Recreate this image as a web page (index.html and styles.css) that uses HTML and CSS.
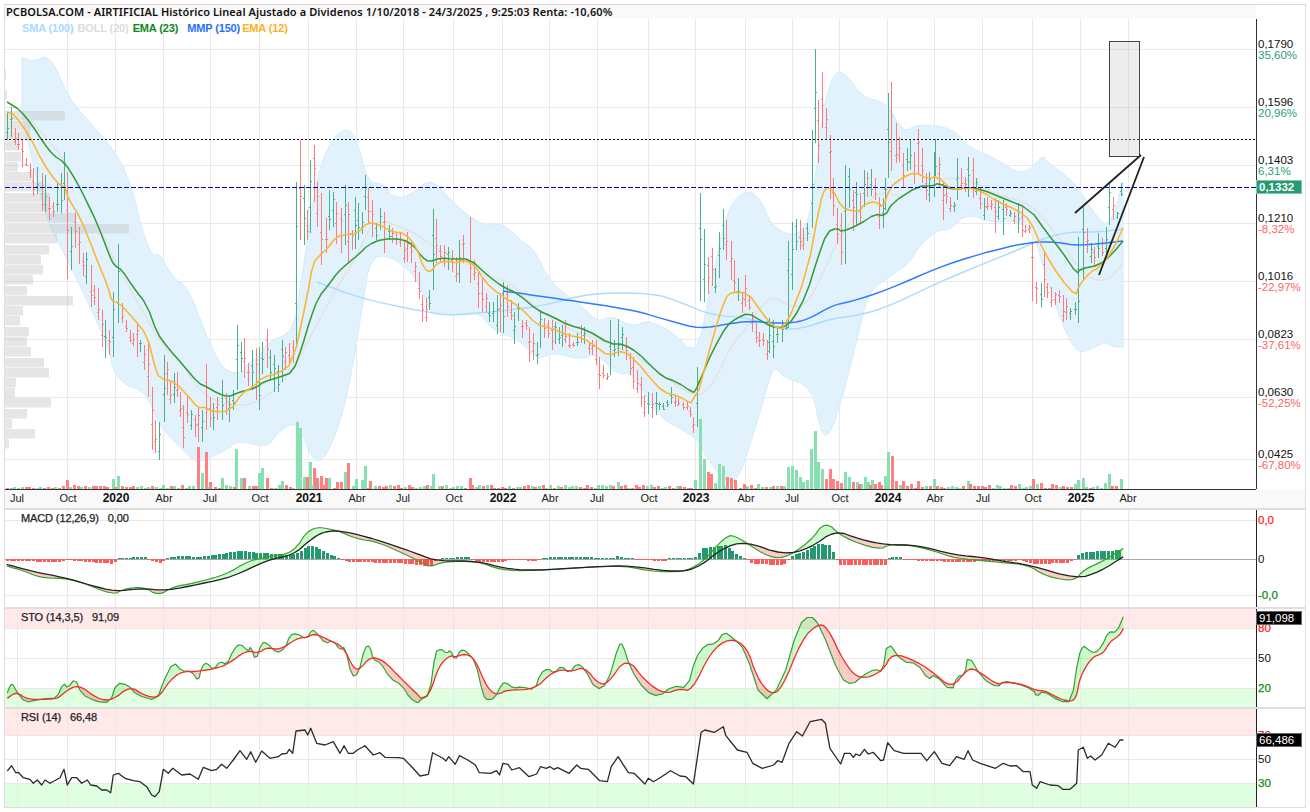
FILE: index.html
```html
<!DOCTYPE html>
<html lang="es">
<head>
<meta charset="utf-8">
<title>PCBOLSA.COM - AIRTIFICIAL</title>
<link rel="stylesheet" href="styles.css">
</head>
<body>
<div class="chart">
  <div class="title-row"><div class="title">PCBOLSA.COM - AIRTIFICIAL Histórico Lineal Ajustado a Dividenos 1/10/2018 - 24/3/2025 , 9:25:03 Renta: -10,60%</div></div>
  <section class="panel panel-main">
    <div class="plot">
      <svg id="plot-main" class="plot-svg" width="1251" height="470" viewBox="5 19 1251 470"></svg>
      <div class="legend">
        <span class="lg-sma">SMA (100)</span>
        <span class="lg-boll">BOLL (20)</span>
        <span class="lg-ema23">EMA (23)</span>
        <span class="lg-mmp">MMP (150)</span>
        <span class="lg-ema12">EMA (12)</span>
      </div>
    </div>
    <div class="axis axis-price">
      <div class="tick"><div>0,1790</div><div class="up">35,60%</div></div>
      <div class="tick"><div>0,1596</div><div class="up">20,96%</div></div>
      <div class="tick"><div>0,1403</div><div class="up">6,31%</div></div>
      <div class="tick"><div>0,1210</div><div class="down">-8,32%</div></div>
      <div class="tick"><div>0,1016</div><div class="down">-22,97%</div></div>
      <div class="tick"><div>0,0823</div><div class="down">-37,61%</div></div>
      <div class="tick tick-wide"><div>0,0630</div><div class="down">-52,25%</div></div>
      <div class="tick"><div>0,0425</div><div class="down">-67,80%</div></div>
      <div class="tag tag-price">0,1332</div>
    </div>
  </section>
  <div class="xaxis"><svg id="x-axis" width="1251" height="18" viewBox="5 490 1251 18"></svg></div>
  <section class="panel panel-macd">
    <div class="plot">
      <svg id="plot-macd" class="plot-svg" width="1251" height="97" viewBox="5 510 1251 97"></svg>
      <div class="study">MACD (12,26,9)<span class="study-val">0,00</span></div>
    </div>
    <div class="axis axis-macd">
      <div class="row row-39 down-strong">0,0</div>
      <div class="row row-36">0</div>
      <div class="row row-11 up-strong">-0,0</div>
    </div>
  </section>
  <section class="panel panel-sto">
    <div class="plot">
      <svg id="plot-sto" class="plot-svg" width="1251" height="98" viewBox="5 609 1251 98"></svg>
      <div class="study">STO (14,3,5)<span class="study-val">91,09</span></div>
    </div>
    <div class="axis axis-sto">
      <div class="row row-30 down-strong">80</div>
      <div class="row row-30">50</div>
      <div class="row row-11 up-strong">20</div>
      <div class="tag tag-sto">91,098</div>
    </div>
  </section>
  <section class="panel panel-rsi">
    <div class="plot">
      <svg id="plot-rsi" class="plot-svg" width="1251" height="98" viewBox="5 709 1251 98"></svg>
      <div class="study">RSI (14)<span class="study-val">66,48</span></div>
    </div>
    <div class="axis axis-rsi">
      <div class="row row-24 down-strong">70</div>
      <div class="row row-24">50</div>
      <div class="row row-11 up-strong">30</div>
      <div class="tag tag-rsi">66,486</div>
    </div>
  </section>
</div>
<script src="chart.js"></script>
</body>
</html>
```
FILE: styles.css
```css
* { box-sizing: border-box; }
html, body { margin: 0; padding: 0; background: #fff; }
body { font-family: "Liberation Sans", Arial, sans-serif; font-size: 11px; color: #111; }
.chart {
  margin: 4px 0 0 4px;
  width: 1302px;
  height: 804px;
  border: 1px solid #dedede;
  border-top-color: #eccfcf;
  background: #dfdfdf;
  display: flex;
  flex-direction: column;
}
.title-row { height: 14px; flex: none; background: #fff; }
.title {
  width: 1251px;
  height: 14px;
  padding-left: 1px;
  background: #f9f9f9;
  font-family: "Noto Sans", sans-serif;
  font-weight: 600;
  font-size: 11px;
  letter-spacing: .085px;
  line-height: 14px;
  color: #111;
  white-space: nowrap;
}
.panel { display: flex; position: relative; background: #fff; flex: none; }
.panel-main { height: 471px; }
.panel-macd { height: 97px; margin-top: 2px; }
.panel-sto, .panel-rsi { height: 98px; margin-top: 2px; }
.plot { position: relative; width: 1251px; flex: none; }
.panel-main .plot { border-bottom: 1px solid #333; height: 471px; }
.plot-svg { display: block; }
.legend {
  position: absolute;
  left: 17px;
  top: 3px;
  display: flex;
  font-size: 11px;
  line-height: 12px;
  font-weight: bold;
  letter-spacing: -.14px;
  white-space: nowrap;
}
.lg-sma { color: #a6dbff; margin-right: 4px; }
.lg-boll { color: #dcdcdc; margin-right: 4px; }
.lg-ema23 { color: #0b8a1a; margin-right: 9px; }
.lg-mmp { color: #1f6fff; margin-right: 2px; }
.lg-ema12 { color: #ffb020; }
.axis {
  position: relative;
  flex: 1;
  padding-left: 1px;
  border-left: 1px solid #222;
  line-height: 11px;
  font-size: 11.5px;
  color: #111;
}
.axis-price { padding-top: 20px; height: 470px; border-left-color: #333; }
.tick { height: 58px; }
.tick-wide { height: 62px; }
.up { color: #2d9e78; }
.down { color: #ff6464; }
.up-strong { color: #0d8a0d; -webkit-text-stroke: .25px #0d8a0d; }
.down-strong { color: #f22; -webkit-text-stroke: .25px #f22; }
.axis-macd { padding-top: 5px; height: 97px; }
.axis-sto { padding-top: 14px; }
.axis-rsi { padding-top: 21px; }
.row-39 { height: 39px; }
.row-36 { height: 36px; }
.row-30 { height: 30px; }
.row-24 { height: 24px; }
.row-11 { height: 11px; }
.row { font-size: 11.5px; }
.tag {
  position: absolute;
  left: -1px;
  width: 46px;
  height: 14px;
  border: 1px solid #666;
  padding-left: 2px;
  line-height: 12px;
  font-size: 11.5px;
  color: #fff;
  background: #000;
}
.tag-price {
  top: 161px;
  font-weight: bold;
  background: #269b72;
  border-color: #7fc9ae;
}
.tag-sto { top: 2px; }
.tag-rsi { top: 24px; }
.xaxis { height: 18px; background: #f9f9f9; flex: none; }
.xaxis svg { display: block; }
.study {
  position: absolute;
  left: 16px;
  top: 2px;
  font-size: 11px;
  line-height: 12px;
  letter-spacing: -.12px;
  -webkit-text-stroke: .25px #222;
  color: #222;
  white-space: nowrap;
}
.study-val { margin-left: 9px; }
.x-month { font-family: "Liberation Sans", sans-serif; font-size: 11px; fill: #222; text-anchor: middle; }
.x-year { font-family: "Liberation Sans", sans-serif; font-size: 12px; font-weight: bold; fill: #111; text-anchor: middle; }
```
FILE: chart.js
```js
// Parse "x,y x,y" strings taken from chart readings, with offset and scale.
function P(s, ox, oy, sx, sy) {
  ox = ox || 0; oy = oy || 0; sx = sx || 1; sy = sy || 1;
  return s.trim().split(/\s+/).map(function (p) {
    var a = p.split(',');
    return [ox + a[0] / sx, oy + a[1] / sy];
  });
}
// Corner-cutting, so the hand-read curves come out smooth.
function smooth(pts, n) {
  for (var k = 0; k < n; k++) {
    var out = [pts[0]];
    for (var i = 0; i < pts.length - 1; i++) {
      var a = pts[i], b = pts[i + 1];
      out.push([a[0] * .75 + b[0] * .25, a[1] * .75 + b[1] * .25]);
      out.push([a[0] * .25 + b[0] * .75, a[1] * .25 + b[1] * .75]);
    }
    out.push(pts[pts.length - 1]);
    pts = out;
  }
  return pts;
}
var seed = 12345;
function rnd() { seed = (seed * 1103515245 + 12345) & 0x7fffffff; return seed / 0x7fffffff; }
function d(pts) { return 'M' + pts.map(function (p) { return p[0].toFixed(1) + ' ' + p[1].toFixed(1); }).join('L'); }
function line(pts, color, w) {
  return '<path d="' + d(pts) + '" fill="none" stroke="' + color + '" stroke-width="' + w + '" stroke-linejoin="round"/>';
}
function interp(pts, x) {
  if (x <= pts[0][0]) return pts[0][1];
  for (var i = 1; i < pts.length; i++) {
    if (x <= pts[i][0]) {
      var a = pts[i - 1], b = pts[i];
      return b[0] === a[0] ? b[1] : a[1] + (b[1] - a[1]) * (x - a[0]) / (b[0] - a[0]);
    }
  }
  return pts[pts.length - 1][1];
}
function rect(x, y, w, h, fill) {
  return '<rect x="' + x + '" y="' + y + '" width="' + w + '" height="' + h + '" fill="' + fill + '"/>';
}
var VX = [67, 115, 163, 210, 259, 308, 356, 403, 453, 502, 549, 597, 648, 695, 745, 792, 839, 887, 934, 982, 1032, 1080, 1128];
var GRID = '#e9e9e9';
function grid(ys, top, bottom, extra) {
  var s = '';
  ys.forEach(function (y) { s += rect(5, y, 1251, 1, GRID); });
  VX.concat(extra || []).forEach(function (x) { s += rect(x, top, 1, bottom - top, GRID); });
  return s;
}
// Shaded area between a fast and a slow line, coloured by which one is on top.
function between(a, b, x0, x1) {
  var s = '', seg = [], sign = 0;
  function flush() {
    if (seg.length > 1) {
      var poly = seg.map(function (r) { return [r[0], r[1]]; })
        .concat(seg.slice().reverse().map(function (r) { return [r[0], r[2]]; }));
      s += '<path d="' + d(poly) + 'Z" fill="' + (sign > 0 ? 'rgba(0,230,0,.2)' : 'rgba(230,30,0,.22)') + '"/>';
    }
    seg = [];
  }
  for (var x = x0; x <= x1; x += 0.5) {
    var ya = interp(a, x), yb = interp(b, x);
    var sg = ya < yb ? 1 : -1;
    if (sg !== sign && seg.length) { seg.push([x, ya, yb]); flush(); }
    sign = sg;
    seg.push([x, ya, yb]);
  }
  flush();
  return s;
}

/* ---------- main chart ---------- */
var ema23 = smooth(P('7,102 20,110 32,125 43,142 53,155 65,163 77,182 87,202 97,223 110,257 114,265 122,270 133,287 147,305 157,333 168,348 183,365 198,383 207,387 217,393 228,397 240,392 248,390 257,387 263,382 280,377 293,372 302,347 310,320 318,298 330,283 337,273 348,263 358,255 368,245 382,239 402,239 413,245 422,257 429,262 440,258 453,259 470,259 487,275 503,287 517,293 537,310 553,317 568,325 587,330 610,344 623,344 637,352 650,365 663,377 677,382 692,392 695,392 703,373 713,350 727,325 737,318 748,313 760,320 772,327 783,328 793,320 807,293 817,260 827,232 837,228 842,232 860,224 875,214 885,216 892,203 918,186 933,186 938,183 953,190 968,187 983,190 1000,197 1030,209 1047,233 1063,253 1077,274 1080,269 1100,265 1113,253 1123,241'), 1);
var ema12 = smooth(P('7,112 15,115 30,137 43,163 57,183 65,187 68,198 80,217 90,242 97,260 108,287 112,302 118,302 133,318 147,335 155,367 159,378 175,382 187,395 198,408 205,407 213,412 230,411 242,393 253,387 263,377 277,374 293,363 307,297 313,263 320,255 328,248 335,238 343,235 358,233 368,222 380,225 393,232 405,233 417,248 423,267 430,273 437,263 447,261 455,263 463,260 475,265 485,282 500,295 520,307 537,325 548,327 567,335 583,338 597,347 608,356 623,350 637,362 650,378 663,392 678,396 695,405 712,340 725,298 732,292 748,293 760,310 773,327 785,329 807,273 820,203 825,188 832,188 842,208 852,211 860,211 863,205 875,201 883,208 890,187 902,178 915,172 928,179 937,176 952,190 967,187 983,192 998,202 1017,210 1030,220 1043,250 1060,278 1076,296 1078,287 1090,272 1100,267 1113,250 1123,228'), 1);
var mmp = smooth(P('503,291 553,298 587,303 633,310 670,321 700,329 727,324 750,321 773,323 790,323 807,320 833,305 850,302 887,290 937,268 973,256 1007,247 1033,242 1057,242 1078,246 1123,241'), 2);
var sma = smooth(P('317,282 360,298 410,309 440,314 453,315 503,311 547,305 590,293 653,293 680,302 710,315 750,318 787,330 807,327 830,319 860,315 887,307 933,285 980,265 1013,252 1047,237 1070,232 1100,232 1123,229'), 2);
var bollMid = smooth(P('23,110 50,143 67,163 110,250 115,263 138,303 163,347 180,360 200,393 227,405 250,405 267,397 293,370 307,343 323,313 337,287 353,263 370,227 380,220 410,230 437,248 453,258 473,267 487,277 507,280 530,303 560,325 593,338 620,347 647,363 673,383 697,398 713,385 730,347 747,327 760,307 773,296 790,307 807,305 823,273 838,240 850,223 877,190 903,198 920,185 947,177 970,180 997,195 1030,203 1047,223 1063,243 1080,272 1105,284 1123,263'), 2);
var upper = smooth(P('22,57 33,62 50,54 68,97 90,123 117,153 133,190 140,223 152,257 160,253 172,277 188,287 207,337 222,368 233,373 243,372 248,363 260,357 267,342 293,332 300,290 317,173 333,137 348,127 358,143 368,183 383,183 392,197 408,197 428,180 440,187 453,203 482,226 503,223 520,240 535,250 550,283 583,307 597,322 612,316 633,327 648,320 673,332 697,357 710,290 727,207 748,188 763,203 770,223 790,237 808,227 817,167 823,107 835,70 847,75 863,98 887,102 903,133 917,124 953,128 968,147 993,157 1017,173 1030,170 1043,155 1047,162 1075,182 1097,218 1110,227 1123,182'), 2);
var lower = smooth(P('22,115 30,150 40,195 50,227 57,240 75,275 110,350 112,370 128,387 137,388 148,397 160,427 180,447 193,460 200,462 227,450 238,440 267,448 277,433 297,420 315,467 330,450 347,400 363,303 370,258 390,255 417,277 430,313 440,315 467,315 480,313 492,330 520,340 537,360 553,352 580,360 597,353 617,375 633,372 657,417 697,437 703,453 728,485 740,477 763,403 773,365 783,377 812,387 820,430 828,438 840,407 857,340 868,293 887,278 910,263 918,247 937,230 950,230 967,213 993,223 1013,220 1033,230 1047,280 1063,327 1078,354 1093,348 1105,342 1113,347 1123,347'), 2);
var profile = [[70,6],[90,7],[111,65],[121,31],[131,30],[141,18],[152,21],[162,18],[172,33],[182,42],[193,50],[203,50],[213,76],[224,129],[234,57],[245,49],[255,41],[265,43],[275,33],[286,27],[296,73],[306,23],[316,20],[327,29],[337,27],[347,31],[358,44],[368,49],[378,16],[388,15],[398,51],[409,27],[419,12],[429,35],[439,9]];

// High / low readings: x,top,bottom,colour (1 green, 0 red)
function B(s, ox, oy) {
  return s.trim().split(/\s+/).map(function (p) {
    var a = p.split(',');
    return [Math.round(ox + a[0] / 3), oy + a[1] / 3, oy + a[2] / 3, +a[3]];
  });
}
var bars = B('22,335,420,1 33,320,410,1 45,385,435,0 55,400,450,0 67,420,500,0 78,475,500,0 90,490,535,0 100,505,590,0 112,500,580,1 125,520,635,0 135,525,635,1 147,590,660,0 158,605,650,0 170,545,635,1 182,520,640,1', 0, 0)
  .concat(B('193,65,210,1 202,125,445,0 214,290,420,1 226,250,355,0 238,290,400,0 249,370,440,0 259,365,460,1 272,405,530,0 283,465,525,0 293,475,570,0 305,540,650,0 316,570,685,1 328,600,675,0 340,485,680,1 355,342,578,1 367,520,580,0 378,570,605,0 389,600,640,0 400,610,650,0 412,575,680,0 421,630,665,1 433,645,720,0 445,630,800,0 457,770,960,0 466,870,970,0 478,875,988,1 491,675,875,1 502,695,795,0 510,755,820,0 521,730,820,1 532,725,800,0 540,785,860,0 550,825,955,0 562,795,880,0 574,840,900,1 584,855,920,0 595,830,935,0 607,840,935,1 619,702,900,0 631,800,890,0 640,820,900,1 652,800,870,0 665,750,870,1 677,790,855,0 688,795,875,1 698,780,840,1 710,585,780,1 722,635,725,1 733,625,745,0 745,700,770,0 755,660,780,1 767,655,810,0 778,650,840,1 787,635,730,1 800,598,715,0 810,660,750,1 823,675,785,1 835,705,785,1 845,630,755,1 855,650,720,0 868,640,705,0 880,630,700,0 889,155,650,1 901,30,330,0 913,165,345,1 922,240,330,0 931,90,310,1 943,45,215,0 952,155,290,0 964,190,405,0 977,265,370,0 988,180,300,1 1000,185,290,1 1008,215,340,0 1022,235,370,0 1034,165,345,1 1045,215,400,0 1055,300,360,0 1066,200,355,1 1075,220,330,1 1085,245,310,1 1096,135,240,1 1105,175,280,0 1116,210,320,0 1128,280,330,1 1140,235,300,1 1152,247,370,0 1166,285,330,1 1175,295,340,0 1188,305,345,0 1200,305,350,0 1211,330,400,0 1221,305,395,0 1232,330,400,0 1244,395,455,0 1256,425,505,0 1265,495,575,0 1277,505,577,0 1288,480,540,1', 0, 130))
  .concat(B('40,238,480,1 48,268,400,0 60,345,400,0 72,345,410,0 85,350,420,1 97,360,425,0 107,380,455,0 118,330,460,1 130,315,400,0 150,262,460,0 162,390,450,0 175,420,535,0 187,440,545,0 197,490,550,0 208,515,575,1 220,515,575,1 232,495,612,1 241,490,608,0 250,455,608,1 262,465,560,0 272,510,570,0 283,545,640,1 295,520,575,1 306,570,625,0 317,570,600,0 328,590,695,0 340,610,690,0 352,635,702,1 361,540,655,1 372,565,625,0 385,570,625,0 397,570,660,0 406,575,640,1 417,590,640,1 427,585,650,1 436,570,640,0 448,610,655,0 460,635,650,0 472,610,650,1 482,585,640,0 493,590,640,1 506,635,670,0 516,630,675,0 527,630,705,0 537,680,775,0 550,705,745,0 560,728,750,0 571,570,735,1 583,630,680,1 595,568,680,1 607,590,660,1 619,620,690,0 630,670,735,0 640,680,775,0 652,720,790,0 664,740,830,0 673,795,860,0 685,785,850,1 697,790,865,0 709,785,855,1 718,815,840,1 730,820,840,1 742,810,830,1 754,770,820,1 765,795,830,0 775,805,830,0 788,815,840,0 800,815,840,0 810,830,860,0 820,860,908,0 830,710,890,1 841,190,515,1 853,297,515,1 864,380,490,0 875,355,470,0 886,415,490,1 898,307,445,1 910,238,360,1 918,270,390,0 932,333,450,0 942,390,490,0 955,445,515,1 965,490,550,0 976,435,530,0 987,495,540,0 995,545,605,0 1008,580,640,0 1018,605,650,0 1030,610,650,0 1040,630,690,0 1048,565,670,1 1060,570,685,1 1072,595,640,1 1085,570,635,1 1097,580,600,1 1105,333,595,1 1117,277,480,1 1128,268,360,1 1140,270,360,0 1150,295,360,0 1162,280,335,1', 420, 130))
  .concat(B('95,270,565,1 105,28,310,1 115,180,370,0 127,97,265,0 139,205,300,0 150,285,478,0 160,415,530,0 172,505,612,0 184,520,675,0 196,375,672,1 208,385,505,1 218,450,573,0 229,425,555,1 240,460,550,0 253,390,500,1 262,395,470,0 274,388,470,1 285,415,480,0 298,470,565,0 308,475,565,1 316,415,510,1 325,160,415,1 334,127,395,0 347,250,370,0 358,290,365,0 369,338,440,0 380,325,395,1 391,297,390,1 403,335,430,0 415,268,405,0 427,325,430,0 437,400,480,0 448,395,485,1 461,335,470,1 466,298,410,1 478,350,440,0 490,430,540,0 498,440,490,0 510,470,515,0 521,485,515,1 532,355,480,1 544,385,450,0 556,410,455,0 565,350,470,1 578,355,475,0 589,415,465,1 600,440,505,0 611,475,540,1 622,470,510,0 634,480,510,0 646,475,580,0 655,480,540,1 668,480,585,1 679,490,530,0 690,510,530,1 703,515,550,0 713,490,580,1 725,500,590,0 735,555,580,0 747,555,580,0 757,610,785,0 768,725,790,0 782,730,803,1 792,635,770,0 802,730,775,0 813,740,800,0 825,755,795,0 837,750,790,0 848,765,845,0 858,775,840,0 870,805,840,1 885,785,825,1 895,590,848,1 910,500,715,1 921,565,640,0 932,610,670,1 943,620,680,0 955,580,655,1 967,595,650,0 977,560,655,1 988,430,555,1 1000,470,540,0 1012,515,535,1 1022,430,470,1', 780, 40));

// Volume readings: x,height,colour. Weeks not listed are drawn small.
var volPeaks = [[67,9,0],[113,10,1],[118,13,1],[198,42,0],[202,16,1],[206,37,0],[210,7,0],[222,11,1],[236,40,1],[241,11,1],[244,11,0],[259,16,1],[262,21,1],[267,11,0],[282,8,1],[297,67,1],[300,61,1],[304,12,1],[307,12,0],[310,27,1],[314,21,0],[317,11,0],[321,13,0],[326,11,0],[329,11,1],[337,7,0],[341,7,0],[345,17,1],[348,26,0],[356,10,1],[362,9,1],[365,23,1],[370,8,0],[433,15,1],[470,11,0],[610,4,1],[618,7,1],[695,9,1],[700,70,1],[704,30,1],[708,17,0],[711,15,0],[715,6,1],[719,25,1],[723,23,1],[727,12,0],[731,11,0],[735,9,0],[788,22,1],[792,23,1],[796,19,1],[800,12,1],[803,7,1],[807,9,1],[811,40,1],[815,58,1],[818,27,1],[822,20,1],[826,10,0],[830,20,0],[833,10,0],[837,8,0],[841,6,0],[845,17,1],[849,12,1],[853,7,0],[857,7,1],[861,5,1],[865,12,1],[868,7,1],[872,9,1],[875,5,0],[879,7,0],[885,13,1],[888,37,1],[892,33,0],[896,8,0],[903,8,0],[918,8,0],[934,10,1],[968,8,1],[1033,10,0],[1041,6,0],[1078,9,1],[1083,11,1],[1105,6,1],[1109,15,1],[1121,10,1]];

var s = '';
s += grid([49, 107, 165, 223, 281, 339, 397, 459], 19, 489);
s += '<path d="' + d(upper.concat(lower.slice().reverse())) + 'Z" fill="#e1f2fd" stroke="#d3ecfd" stroke-width="1"/>';
profile.forEach(function (r) { s += rect(5, r[0], r[1] - 5, 9.5, 'rgba(190,190,190,.38)'); });
s += line(bollMid, '#e2e2e2', 1.4);
s += line(sma, '#a9dcff', 1.4);

// volume
var used = {};
volPeaks.forEach(function (v) {
  used[Math.round((v[0] - 7) / 3.72)] = 1;
  s += rect(v[0] - 1, 489 - v[1], 3, v[1], v[2] ? '#86e0b0' : '#ff8080');
});
for (var i = 0; i < 300; i++) {
  var r1 = rnd(), r2 = rnd();
  if (used[i]) continue;
  var vx = Math.round(7 + 3.72 * i);
  var mx = vx < 60 ? 1.5 : vx < 190 ? 3.5 : vx < 700 ? 4 : vx < 1078 ? 4.5 : 3;
  if (vx > 1124) continue;
  var vh = Math.ceil(r1 * mx);
  s += rect(vx - 1, 489 - vh, 3, vh, r2 > 0.5 ? '#86e0b0' : '#ff8080');
}

// OHLC bars
bars.forEach(function (b) {
  var col = b[3] ? '#4bb08a' : '#ff7b7b';
  var h = b[2] - b[1];
  var a = Math.round(b[1] + h * (0.2 + rnd() * 0.6)), c = Math.round(b[1] + h * (0.2 + rnd() * 0.6));
  s += rect(b[0], Math.round(b[1]), 1, Math.round(h), col);
  s += rect(b[0] - 1, a, 1, 1, col);
  s += rect(b[0] + 1, c, 1, 1, col);
});
s += line(mmp, '#2f7cff', 1.5);
s += line(ema23, '#349b34', 1.5);
s += line(ema12, '#ffb22c', 1.5);
s += '<line x1="5" x2="1256" y1="139.5" y2="139.5" stroke="#111" stroke-dasharray="2 2"/>';
s += '<line x1="5" x2="1256" y1="187.5" y2="187.5" stroke="#0000bb" stroke-dasharray="5 2"/>';
s += '<rect x="1109.5" y="41.5" width="30" height="115" fill="rgba(190,190,190,.27)" stroke="#444"/>';
s += '<path d="M1075 213L1141 155M1099 275L1144 157" stroke="#222" stroke-width="1.8" fill="none"/>';
document.getElementById('plot-main').innerHTML = s;

/* ---------- x axis ---------- */
var xl = [[17,'Jul'],[68,'Oct'],[116,'2020',1],[164,'Abr'],[210,'Jul'],[260,'Oct'],[309,'2021',1],[357,'Abr'],[403,'Jul'],[454,'Oct'],[503,'2022',1],[550,'Abr'],[597,'Jul'],[649,'Oct'],[696,'2023',1],[746,'Abr'],[792,'Jul'],[840,'Oct'],[888,'2024',1],[935,'Abr'],[983,'Jul'],[1033,'Oct'],[1081,'2025',1],[1128,'Abr']];
document.getElementById('x-axis').innerHTML = xl.map(function (t) {
  return '<text x="' + t[0] + '" y="502" class="' + (t[2] ? 'x-year' : 'x-month') + '">' + t[1] + '</text>';
}).join('');

/* ---------- MACD ---------- */
var macdSig = smooth(P('20,373 100,395 190,412 270,435 345,455 420,445 500,452 600,432 700,410 800,360 880,345 930,300 970,275 1020,272 1100,290 1210,326', 0, 440, 3, 3)
  .concat(P('0,165 45,183 150,183 220,205 290,212 460,200 550,197 650,215 720,210 790,145 850,123 950,165 1020,145 1085,90 1150,118 1220,135 1300,135 1400,165 1470,172', 420, 500, 2.615, 3))
  .concat(P('0,182 90,195 230,237 300,215 370,170', 1000, 500, 3, 3)), 2);
var macd = smooth(P('20,378 70,392 120,413 190,415 240,425 340,465 370,447 430,440 475,467 520,440 580,430 680,403 740,365 800,350 880,340 930,258 1010,270 1070,297 1130,305 1210,340', 0, 440, 3, 3)
  .concat(P('0,185 25,202 60,185 150,183 210,210 290,213 460,200 530,197 620,217 720,212 800,105 830,110 900,165 950,178 1020,125 1060,62 1105,113 1200,150 1230,132 1290,137 1350,155 1400,175 1500,185', 420, 500, 2.615, 3))
  .concat(P('0,187 85,195 130,225 190,240 228,238 250,210 310,183 370,145', 1000, 500, 3, 3)), 2);
var hist = P('7,-2 60,-3 67,-1 90,-3 113,-5 120,1 145,2 150,-2 160,-4 167,1 180,3 200,2 240,8 260,6 290,4 300,7 310,14 320,10 335,2 340,0 350,-3 400,-4 420,-6')
  .concat(P('0,-7 30,-7 40,-2 60,1 130,2 135,0 150,-3 220,-3 225,-1 280,-1.5 310,-1.5 330,1.5 450,1.5 470,0 500,1 520,3 540,1 580,-1 640,-2 650,0 660,1 710,1 720,2 740,11 800,14 820,7 840,2 850,0 870,-5 950,-6 960,-2 970,3 1000,7 1040,15 1070,14 1085,3 1098,-6 1220,-6 1228,2 1260,2 1265,0 1310,-2 1420,-3 1480,-2 1560,-2', 420, 0, 2.615, 1))
  .concat(P('60,-1 100,-5 200,-4 225,-1 232,4 260,7 370,9', 1000, 0, 3, 1));

var m = grid([520, 595], 510, 607);
m += rect(5, 559, 1251, 1, '#a8a8a8');
for (var j = 0; j < 300; j++) {
  var hx = Math.round(7 + 3.72 * j);
  if (hx > 1124) break;
  var hv = interp(hist, hx);
  var hh = Math.max(0.5, Math.abs(hv));
  m += hv >= 0 ? rect(hx - 1, 559 - Math.round(hh), 3, Math.round(hh), '#24996f') : rect(hx - 1, 559, 3, Math.round(hh), '#ff5a5a');
}
m += between(macd, macdSig, 7, 1123);
m += line(macd, '#3a9e32', 1.2);
m += line(macdSig, '#222', 1.3);
document.getElementById('plot-macd').innerHTML = m;

/* ---------- Stochastic ---------- */
var stoK = smooth(P('22,278 35,247 50,275 75,307 110,300 140,295 170,295 190,248 203,265 225,235 245,283 290,305 330,308 350,248 385,255 410,285 470,303 490,245 520,185 545,213 575,213 595,245 605,200 620,187 640,210 660,183 680,195 700,150 720,130 745,155 752,138 767,183 785,128 800,128 830,160 855,145 870,105 890,100 920,118 935,90 947,95 975,130 1000,122 1020,150 1035,140 1055,230 1075,222 1095,140 1110,138 1120,180 1140,185 1170,235 1205,255 1230,295 1255,310', 0, 600, 3, 3)
  .concat(P('0,600 25,585 40,455 55,447 70,460 80,450 92,482 105,450 120,452 145,485 165,585 175,600 195,595 215,550 225,548 245,565 265,560 300,570 315,520 335,505 350,520 370,497 390,520 410,490 430,505 460,570 490,553 520,432 530,432 550,505 590,575 625,590 660,558 700,563 720,475 745,435 775,430 795,395 820,415 850,450 895,610 945,555 990,375 1020,345 1045,375 1100,535 1130,555 1160,525 1190,507 1210,517 1222,422 1260,485 1300,490 1330,540 1345,522 1390,575 1405,528 1425,525 1433,463 1470,535 1510,563', 420, 500, 2.615, 3))
  .concat(P('10,543 50,550 100,570 110,590 130,572 180,605 215,605 235,470 250,435 265,450 285,460 305,440 325,395 350,397 370,350', 1000, 500, 3, 3)), 1);
var stoD = smooth(P('22,295 50,275 80,298 140,298 175,295 195,275 235,253 290,295 335,303 390,258 430,285 475,295 510,240 545,215 585,215 640,207 680,195 740,150 775,160 800,142 840,150 890,115 920,112 945,100 990,122 1030,140 1060,205 1080,208 1110,170 1150,180 1205,238 1260,290', 0, 600, 3, 3)
  .concat(P('0,595 25,585 50,495 80,465 90,472 120,460 145,480 170,550 190,580 210,582 225,570 300,568 340,522 370,508 395,515 430,500 465,550 490,553 540,470 590,545 640,583 680,565 710,575 760,455 810,413 855,440 880,530 915,583 945,570 1000,415 1040,372 1065,380 1110,490 1150,540 1210,515 1235,457 1300,485 1345,520 1390,565 1430,510 1450,505 1510,555', 420, 500, 2.615, 3))
  .concat(P('10,547 60,550 110,572 135,572 180,597 215,605 230,590 240,530 275,472 310,460 330,425 360,405 370,385', 1000, 500, 3, 3)), 2);
var t = rect(5, 609, 1251, 19, '#ffe9e9') + rect(5, 688, 1251, 19, '#e0ffe0');
t += grid([628, 658, 688], 609, 707, [17]);
t += between(stoK, stoD, 7, 1123);
t += line(stoK, '#35a035', 1.2);
t += line(stoD, '#f52a2a', 1.3);
document.getElementById('plot-sto').innerHTML = t;

/* ---------- RSI ---------- */
var rsi = P('22,513 35,497 47,518 55,517 70,533 90,538 100,550 112,540 125,555 135,540 150,550 180,533 192,508 202,555 215,533 230,533 245,550 262,540 272,555 290,558 305,570 320,570 332,578 340,525 355,520 375,535 400,542 420,545 440,560 455,585 465,590 478,575 490,508 505,520 518,505 545,525 570,522 595,538 610,502 635,512 650,508 665,493 680,505 700,480 720,452 740,478 752,455 767,487 785,453 810,475 835,470 845,462 860,460 868,448 878,460 888,393 915,390 923,405 932,385 950,430 975,435 1000,425 1020,460 1032,437 1045,460 1060,460 1072,450 1095,437 1120,465 1140,458 1155,472 1195,473 1210,475 1235,500', 0, 600, 3, 3)
  .concat(P('0,828 22,823 33,758 60,775 68,783 75,770 92,793 103,767 125,780 145,795 155,818 185,820 200,812 208,825 217,790 230,793 240,810 260,803 285,830 305,822 315,800 330,805 340,800 350,808 360,803 390,820 410,795 420,805 440,808 470,842 490,845 500,800 518,770 545,818 560,820 588,852 597,835 610,845 630,832 655,812 680,828 695,830 715,852 735,697 745,690 770,697 793,680 800,707 830,750 855,757 870,790 895,805 925,795 935,782 947,787 965,730 985,695 1000,708 1020,665 1050,658 1060,670 1072,745 1100,792 1110,760 1125,760 1133,772 1140,762 1150,767 1162,748 1172,762 1185,757 1205,782 1212,780 1223,728 1240,752 1265,760 1310,760 1325,782 1345,755 1365,790 1385,797 1403,770 1423,778 1433,752 1445,780 1465,790 1505,805', 420, 500, 2.615, 3))
  .concat(P('10,790 30,798 50,797 70,815 90,815 97,855 110,865 120,845 150,855 175,857 188,868 210,868 230,850 235,750 250,742 262,775 272,768 285,780 305,765 325,730 345,742 360,720 370,720', 1000, 500, 3, 3));
var q = rect(5, 709, 1251, 26, '#ffe9e9') + rect(5, 783, 1251, 24, '#e0ffe0');
q += grid([735, 759, 783], 709, 807, [17]);
q += line(rsi, '#2a2a2a', 1.3);
document.getElementById('plot-rsi').innerHTML = q;
```
